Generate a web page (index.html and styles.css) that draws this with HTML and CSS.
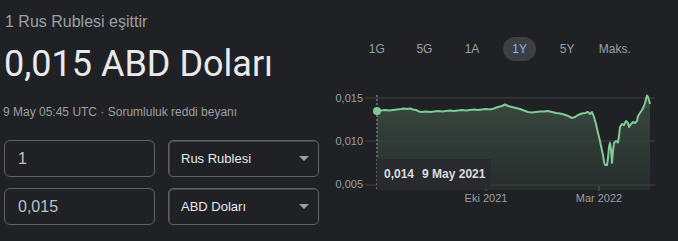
FILE: index.html
```html
<!DOCTYPE html>
<html lang="tr">
<head>
<meta charset="utf-8">
<link rel="stylesheet" href="styles.css">
</head>
<body>
<div class="page">
  <div class="left">
    <div class="eq">1 Rus Rublesi eşittir</div>
    <div class="big">0,015 ABD Doları</div>
    <div class="date">9 May 05:45 UTC · Sorumluluk reddi beyanı</div>
    <div class="conv">
      <div class="row">
        <div class="inp">1</div>
        <div class="sel"><span>Rus Rublesi</span><i class="arrow"></i></div>
      </div>
      <div class="row">
        <div class="inp">0,015</div>
        <div class="sel"><span>ABD Doları</span><i class="arrow"></i></div>
      </div>
    </div>
  </div>
  <div class="right">
    <div class="tabs">
      <div class="tab"><span>1G</span></div>
      <div class="tab"><span>5G</span></div>
      <div class="tab"><span>1A</span></div>
      <div class="tab active"><span>1Y</span></div>
      <div class="tab"><span>5Y</span></div>
      <div class="tab"><span>Maks.</span></div>
    </div>
    <div class="chart">
      <svg class="plot" width="348" height="179" viewBox="0 0 348 179">
        <defs>
          <linearGradient id="fillg" x1="0" y1="0" x2="0" y2="1">
            <stop offset="0" stop-color="#81c995" stop-opacity="0.24"/>
            <stop offset="1" stop-color="#81c995" stop-opacity="0.07"/>
          </linearGradient>
        </defs>
        <g transform="translate(-330 -61)">
          <polygon fill="url(#fillg)" points="377,190 377,111 381,110.5 385,110 389,110.5 393,110 397,109.5 401,109 404,108.5 407,109 410,108.5 413,109.5 416,110 419,111.5 422,112 426,111.5 430,112 434,111.5 438,111 442,111.5 446,111 450,110.5 454,111 458,110.5 462,110 466,110.5 470,110 474,109.5 478,110 482,109.5 486,109 490,109.5 494,108.5 498,107 502,106 505,104.5 508,106 512,107 516,108 520,109 524,110.5 528,112 532,112.5 536,112 540,111.5 544,111.5 548,111 552,112 556,113 560,113.5 564,114.5 568,116 572,118 575,117 578,115 582,113.5 585,113 588,112 590,114 592,112 594,117 596,124 598,133 600,141 601,146 603,155 604,162 605,165 607,165 608,158 609,147 610,143 611,150 612,163 613,151 614,143 616,141 618,142.5 619,136 620,127 622,124 624,125 626,121 628,123 629,127 631,124 633,122 635,123 637,121 638,116 640,113 642,110 644,106 645,103 646,99 647,95.5 648,97 649,100 650,104 650,190"/>
          <line class="grid" x1="365" y1="98" x2="655" y2="98"/>
          <line class="grid" x1="365" y1="141" x2="655" y2="141"/>
          <line class="grid" x1="365" y1="185" x2="655" y2="185"/>
          <line class="tick" x1="486" y1="186" x2="486" y2="191"/>
          <line class="tick" x1="599" y1="186" x2="599" y2="191"/>
          <line class="cursor" x1="377" y1="95" x2="377" y2="190"/>
          <polyline class="line" points="377,111 381,110.5 385,110 389,110.5 393,110 397,109.5 401,109 404,108.5 407,109 410,108.5 413,109.5 416,110 419,111.5 422,112 426,111.5 430,112 434,111.5 438,111 442,111.5 446,111 450,110.5 454,111 458,110.5 462,110 466,110.5 470,110 474,109.5 478,110 482,109.5 486,109 490,109.5 494,108.5 498,107 502,106 505,104.5 508,106 512,107 516,108 520,109 524,110.5 528,112 532,112.5 536,112 540,111.5 544,111.5 548,111 552,112 556,113 560,113.5 564,114.5 568,116 572,118 575,117 578,115 582,113.5 585,113 588,112 590,114 592,112 594,117 596,124 598,133 600,141 601,146 603,155 604,162 605,165 607,165 608,158 609,147 610,143 611,150 612,163 613,151 614,143 616,141 618,142.5 619,136 620,127 622,124 624,125 626,121 628,123 629,127 631,124 633,122 635,123 637,121 638,116 640,113 642,110 644,106 645,103 646,99 647,95.5 648,97 649,100 650,104"/>
          <circle class="dot" cx="377" cy="111" r="4"/>
          <text class="ylab" x="363" y="101.5">0,015</text>
          <text class="ylab" x="363" y="144.5">0,010</text>
          <text class="ylab" x="363" y="188">0,005</text>
          <text class="xlab" x="486" y="202">Eki 2021</text>
          <text class="xlab" x="599" y="202">Mar 2022</text>
        </g>
      </svg>
      <div class="tip"><span>0,014</span><span>9 May 2021</span></div>
    </div>
    <div class="feedback">Geri bildirim</div>
  </div>
</div>
</body>
</html>
```
FILE: styles.css
```css
html, body {
  margin: 0;
  padding: 0;
  background: #202124;
  overflow: hidden;
}
.page {
  display: flex;
  width: 678px;
  height: 241px;
  font-family: "Liberation Sans", Arial, sans-serif;
}
.left {
  width: 326px;
  padding: 12px 0 0 4px;
  flex: none;
}
.eq {
  font-size: 16px;
  line-height: 20px;
  color: #9aa0a6;
  margin-left: 1px;
}
.big {
  margin-top: 10px;
  font-family: Roboto, "Liberation Sans", sans-serif;
  font-size: 36px;
  line-height: 44px;
  color: #e8eaed;
}
.date {
  margin-top: 18px;
  font-size: 12px;
  line-height: 16px;
  color: #9aa0a6;
  margin-left: -1px;
}
.conv {
  margin-top: 20px;
  display: flex;
  flex-direction: column;
  gap: 11px;
}
.row {
  display: flex;
  gap: 13px;
}
.inp {
  box-sizing: border-box;
  width: 151px;
  height: 37px;
  border: 1px solid #5f6368;
  border-radius: 6px;
  padding-left: 13px;
  font-size: 16px;
  line-height: 35px;
  color: #bdc1c6;
}
.sel {
  box-sizing: border-box;
  width: 151px;
  height: 37px;
  border: 1px solid #5f6368;
  border-radius: 5px;
  box-shadow: inset 1px 1px 0 #44474b;
  padding: 0 9px 0 12px;
  display: flex;
  align-items: center;
  justify-content: space-between;
  font-size: 13px;
  color: #e8eaed;
}
.arrow {
  width: 0;
  height: 0;
  border-left: 5px solid transparent;
  border-right: 5px solid transparent;
  border-top: 5px solid #9aa0a6;
}
.right {
  flex: 1;
  display: flex;
  flex-direction: column;
}
.tabs {
  margin-top: 37px;
  margin-left: 23px;
  display: grid;
  grid-template-columns: repeat(6, 47.6px);
  height: 24px;
}
.tab {
  display: flex;
  justify-content: center;
  align-items: center;
  font-size: 12px;
  color: #9aa0a6;
}
.tab span {
  height: 24px;
  line-height: 24px;
  padding: 0 9px;
  border-radius: 12px;
  white-space: nowrap;
}
.tab.active span {
  background: #3c4043;
  color: #8ab4f8;
}
.chart {
  position: relative;
  height: 179px;
}
.plot {
  display: block;
}
.grid {
  stroke: #3f4246;
  stroke-width: 1;
}
.tick {
  stroke: #5f6368;
  stroke-width: 1;
}
.cursor {
  stroke: #9aa0a6;
  stroke-width: 1;
  stroke-dasharray: 2 2;
}
.line {
  fill: none;
  stroke: #81c995;
  stroke-width: 2;
  stroke-linejoin: round;
}
.dot {
  fill: #81c995;
}
.ylab {
  font-family: "Liberation Sans", Arial, sans-serif;
  font-size: 11px;
  fill: #9aa0a6;
  text-anchor: end;
}
.xlab {
  font-family: "Liberation Sans", Arial, sans-serif;
  font-size: 11px;
  fill: #9aa0a6;
  text-anchor: middle;
}
.tip {
  position: absolute;
  left: 47px;
  top: 98px;
  width: 114px;
  height: 30px;
  box-sizing: border-box;
  background: #292a2d;
  display: flex;
  align-items: center;
  gap: 8px;
  padding-left: 7px;
  font-size: 12px;
  font-weight: bold;
  color: #dadce0;
}
.feedback {
  text-align: right;
  padding-right: 26px;
  margin-top: 0;
  font-size: 12px;
  line-height: 16px;
  color: #9aa0a6;
}
```
